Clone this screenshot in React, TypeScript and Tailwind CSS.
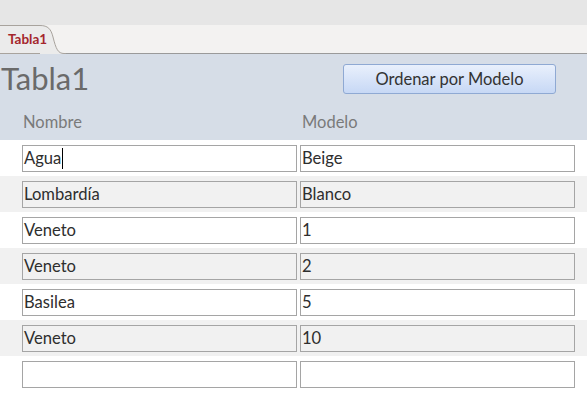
import React from "react";

const rows: { n: string; m: string; cursor?: boolean }[] = [
  { n: "Agua", m: "Beige", cursor: true },
  { n: "Lombardía", m: "Blanco" },
  { n: "Veneto", m: "1" },
  { n: "Veneto", m: "2" },
  { n: "Basilea", m: "5" },
  { n: "Veneto", m: "10" },
  { n: "", m: "" },
];

function Field({ text, alt, cursor }: { text: string; alt: boolean; cursor?: boolean }) {
  return (
    <div
      className={`h-[27px] border border-[#a5a5a5] flex items-center pl-[1px] text-[16.6px] text-[#2e2e2e] ${
        alt ? "bg-[#f1f1f1]" : "bg-white"
      }`}
    >
      <span className="leading-none">{text}</span>
      {cursor && <span className="ml-[1px] w-px h-[21px] bg-black" />}
    </div>
  );
}

export default function App() {
  return (
    <div className="w-[587px] h-[393px] overflow-hidden bg-white" style={{ fontFamily: "Lato, 'Open Sans', sans-serif" }}>
      <div className="h-[25px] bg-[#e6e6e6]" />
      <div className="h-[29px] flex bg-[#f3f2f1]">
        <div className="w-[40px] bg-[#ebebeb] border-t border-b border-[#a8a39d] flex items-center pl-[8px]">
          <span className="relative z-10 text-[13.5px] font-bold text-[#a4262c] leading-none whitespace-nowrap">Tabla1</span>
        </div>
        <svg width="26" height="29" viewBox="0 0 26 29" className="block shrink-0">
          <path d="M0 0 L0 29 L26 29 L26 28 L24 28 C18 28 16 24 13 12 C11 4 8 0.5 0 0.5 Z" fill="#ebebeb" />
          <path d="M0 0.5 C8 0.5 11 4 13 12 C16 24 18 28.5 24 28.5 L26 28.5" fill="none" stroke="#a8a39d" strokeWidth="1" />
        </svg>
        <div className="flex-1 border-b border-[#9a9a9a]" />
      </div>
      <div className="h-[86px] bg-[#d6dde7] flex flex-col">
        <div className="h-[50px] flex items-center justify-between pr-[31px]">
          <span className="text-[31px] leading-none text-[#6a6a6a] pl-[1px] -mt-[2px]">Tabla1</span>
          <button className="w-[213px] h-[30px] rounded-[3px] border border-[#8fa9d3] bg-gradient-to-b from-[#e9f0fc] to-[#c7d8f5] text-[16.5px] text-[#333] leading-none">
            Ordenar por Modelo
          </button>
        </div>
        <div className="flex-1 flex items-center text-[16.5px] text-[#7a7a7a]">
          <span className="pl-[23px] w-[302px]">Nombre</span>
          <span>Modelo</span>
        </div>
      </div>
      {rows.map((r, i) => {
        const alt = i % 2 === 1;
        return (
          <div key={i} className={`h-[36px] flex items-center gap-[3px] pl-[22px] pr-[12px] ${alt ? "bg-[#f1f1f1]" : "bg-white"}`}>
            <div className="w-[275px]">
              <Field text={r.n} alt={alt} cursor={r.cursor} />
            </div>
            <div className="w-[275px]">
              <Field text={r.m} alt={alt} />
            </div>
          </div>
        );
      })}
    </div>
  );
}
